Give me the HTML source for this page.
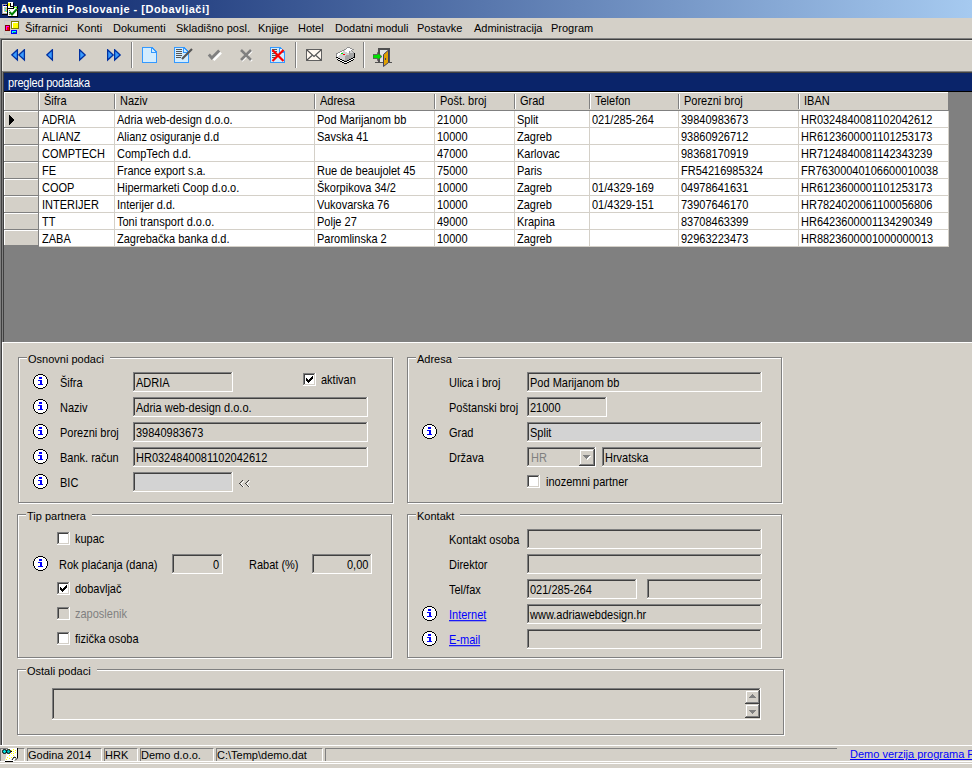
<!DOCTYPE html><html><head><meta charset="utf-8"><style>
html,body{margin:0;padding:0;width:972px;height:768px;overflow:hidden;background:#d4d0c8}
body>div,body>svg{position:absolute}
div{box-sizing:content-box}
.s{transform:scaleY(1.125);transform-origin:0 10px}
.t{position:absolute;font-family:"Liberation Sans",sans-serif;font-size:11px;line-height:13px;white-space:pre;color:#000}
</style></head><body>
<div style="left:0px;top:0px;width:972px;height:18px;background:linear-gradient(to right,#0a246a,#a6caf0);"></div>
<div class="t" style="left:20px;top:3px;color:#fff;font-weight:bold;letter-spacing:0.5px">Aventin Poslovanje - [Dobavljači]</div>
<div style="left:0px;top:18px;width:972px;height:20px;background:#d4d0c8;"></div>
<div class="t" style="left:25px;top:22px;">Šifrarnici</div>
<div class="t" style="left:77px;top:22px;">Konti</div>
<div class="t" style="left:113px;top:22px;">Dokumenti</div>
<div class="t" style="left:176px;top:22px;">Skladišno posl.</div>
<div class="t" style="left:258px;top:22px;">Knjige</div>
<div class="t" style="left:298px;top:22px;">Hotel</div>
<div class="t" style="left:335px;top:22px;">Dodatni moduli</div>
<div class="t" style="left:417px;top:22px;">Postavke</div>
<div class="t" style="left:474px;top:22px;">Administracija</div>
<div class="t" style="left:551px;top:22px;">Program</div>
<div style="left:0px;top:38px;width:972px;height:1px;background:#808080;"></div>
<div style="left:1px;top:39px;width:971px;height:1px;background:#404040;"></div>
<div style="left:0px;top:38px;width:1px;height:707px;background:#808080;"></div>
<div style="left:1px;top:39px;width:1px;height:706px;background:#404040;"></div>
<div style="left:2px;top:40px;width:970px;height:31px;background:#d4d0c8;"></div>
<div style="left:2px;top:40px;width:970px;height:1px;background:#f0eee8;"></div>
<div style="left:2px;top:40px;width:1px;height:31px;background:#f0eee8;"></div>
<div style="left:2px;top:71px;width:970px;height:1px;background:#808080;"></div>
<div style="left:3px;top:72px;width:969px;height:1px;background:#404040;"></div>
<div style="left:2px;top:71px;width:1px;height:271px;background:#808080;"></div>
<div style="left:3px;top:72px;width:1px;height:270px;background:#404040;"></div>
<div style="left:4px;top:73px;width:968px;height:269px;background:#808080;"></div>
<div style="left:4px;top:73px;width:968px;height:18px;background:#0a246a;"></div>
<div class="t s" style="left:8px;top:77px;color:#fff;letter-spacing:-0.2px">pregled podataka</div>
<div style="left:4px;top:91px;width:968px;height:1px;background:#000;"></div>
<div style="left:4px;top:92px;width:944px;height:19px;background:#d4d0c8;"></div>
<div style="left:4px;top:92px;width:944px;height:1px;background:#ffffff;"></div>
<div style="left:4px;top:110px;width:944px;height:1px;background:#808080;"></div>
<div style="left:4px;top:92px;width:1px;height:18px;background:#ffffff;"></div>
<div style="left:38px;top:92px;width:1px;height:19px;background:#808080;"></div>
<div style="left:39px;top:92px;width:1px;height:18px;background:#ffffff;"></div>
<div style="left:114px;top:94px;width:1px;height:15px;background:#808080;"></div>
<div style="left:115px;top:94px;width:1px;height:15px;background:#ffffff;"></div>
<div style="left:314px;top:94px;width:1px;height:15px;background:#808080;"></div>
<div style="left:315px;top:94px;width:1px;height:15px;background:#ffffff;"></div>
<div style="left:434px;top:94px;width:1px;height:15px;background:#808080;"></div>
<div style="left:435px;top:94px;width:1px;height:15px;background:#ffffff;"></div>
<div style="left:514px;top:94px;width:1px;height:15px;background:#808080;"></div>
<div style="left:515px;top:94px;width:1px;height:15px;background:#ffffff;"></div>
<div style="left:589px;top:94px;width:1px;height:15px;background:#808080;"></div>
<div style="left:590px;top:94px;width:1px;height:15px;background:#ffffff;"></div>
<div style="left:678px;top:94px;width:1px;height:15px;background:#808080;"></div>
<div style="left:679px;top:94px;width:1px;height:15px;background:#ffffff;"></div>
<div style="left:798px;top:94px;width:1px;height:15px;background:#808080;"></div>
<div style="left:799px;top:94px;width:1px;height:15px;background:#ffffff;"></div>
<div class="t s" style="left:44px;top:95px;">Šifra</div>
<div class="t s" style="left:120px;top:95px;">Naziv</div>
<div class="t s" style="left:320px;top:95px;">Adresa</div>
<div class="t s" style="left:440px;top:95px;">Pošt. broj</div>
<div class="t s" style="left:520px;top:95px;">Grad</div>
<div class="t s" style="left:595px;top:95px;">Telefon</div>
<div class="t s" style="left:684px;top:95px;">Porezni broj</div>
<div class="t s" style="left:804px;top:95px;">IBAN</div>
<div style="left:4px;top:111px;width:34px;height:16px;background:#d4d0c8;"></div>
<div style="left:4px;top:111px;width:34px;height:1px;background:#ffffff;"></div>
<div style="left:4px;top:111px;width:1px;height:16px;background:#ffffff;"></div>
<div style="left:4px;top:127px;width:35px;height:1px;background:#808080;"></div>
<div style="left:38px;top:111px;width:1px;height:17px;background:#808080;"></div>
<div style="left:39px;top:111px;width:910px;height:17px;background:#e8e6e0;"></div>
<div style="left:39px;top:111px;width:909px;height:16px;background:#fff;"></div>
<div style="left:114px;top:111px;width:1px;height:16px;background:#d4d0c8;"></div>
<div style="left:314px;top:111px;width:1px;height:16px;background:#d4d0c8;"></div>
<div style="left:434px;top:111px;width:1px;height:16px;background:#d4d0c8;"></div>
<div style="left:514px;top:111px;width:1px;height:16px;background:#d4d0c8;"></div>
<div style="left:589px;top:111px;width:1px;height:16px;background:#d4d0c8;"></div>
<div style="left:678px;top:111px;width:1px;height:16px;background:#d4d0c8;"></div>
<div style="left:798px;top:111px;width:1px;height:16px;background:#d4d0c8;"></div>
<div style="left:948px;top:111px;width:1px;height:17px;background:#d4d0c8;"></div>
<div style="left:39px;top:127px;width:910px;height:1px;background:#d4d0c8;"></div>
<div class="t s" style="left:42px;top:114px;">ADRIA</div>
<div class="t s" style="left:117px;top:114px;">Adria web-design d.o.o.</div>
<div class="t s" style="left:317px;top:114px;">Pod Marijanom bb</div>
<div class="t s" style="left:437px;top:114px;">21000</div>
<div class="t s" style="left:517px;top:114px;">Split</div>
<div class="t s" style="left:592px;top:114px;">021/285-264</div>
<div class="t s" style="left:681px;top:114px;">39840983673</div>
<div class="t s" style="left:801px;top:114px;">HR0324840081102042612</div>
<div style="left:4px;top:128px;width:34px;height:16px;background:#d4d0c8;"></div>
<div style="left:4px;top:128px;width:34px;height:1px;background:#ffffff;"></div>
<div style="left:4px;top:128px;width:1px;height:16px;background:#ffffff;"></div>
<div style="left:4px;top:144px;width:35px;height:1px;background:#808080;"></div>
<div style="left:38px;top:128px;width:1px;height:17px;background:#808080;"></div>
<div style="left:39px;top:128px;width:910px;height:17px;background:#e8e6e0;"></div>
<div style="left:39px;top:128px;width:909px;height:16px;background:#fff;"></div>
<div style="left:114px;top:128px;width:1px;height:16px;background:#d4d0c8;"></div>
<div style="left:314px;top:128px;width:1px;height:16px;background:#d4d0c8;"></div>
<div style="left:434px;top:128px;width:1px;height:16px;background:#d4d0c8;"></div>
<div style="left:514px;top:128px;width:1px;height:16px;background:#d4d0c8;"></div>
<div style="left:589px;top:128px;width:1px;height:16px;background:#d4d0c8;"></div>
<div style="left:678px;top:128px;width:1px;height:16px;background:#d4d0c8;"></div>
<div style="left:798px;top:128px;width:1px;height:16px;background:#d4d0c8;"></div>
<div style="left:948px;top:128px;width:1px;height:17px;background:#d4d0c8;"></div>
<div style="left:39px;top:144px;width:910px;height:1px;background:#d4d0c8;"></div>
<div class="t s" style="left:42px;top:131px;">ALIANZ</div>
<div class="t s" style="left:117px;top:131px;">Alianz osiguranje d.d</div>
<div class="t s" style="left:317px;top:131px;">Savska 41</div>
<div class="t s" style="left:437px;top:131px;">10000</div>
<div class="t s" style="left:517px;top:131px;">Zagreb</div>
<div class="t s" style="left:681px;top:131px;">93860926712</div>
<div class="t s" style="left:801px;top:131px;">HR6123600001101253173</div>
<div style="left:4px;top:145px;width:34px;height:16px;background:#d4d0c8;"></div>
<div style="left:4px;top:145px;width:34px;height:1px;background:#ffffff;"></div>
<div style="left:4px;top:145px;width:1px;height:16px;background:#ffffff;"></div>
<div style="left:4px;top:161px;width:35px;height:1px;background:#808080;"></div>
<div style="left:38px;top:145px;width:1px;height:17px;background:#808080;"></div>
<div style="left:39px;top:145px;width:910px;height:17px;background:#e8e6e0;"></div>
<div style="left:39px;top:145px;width:909px;height:16px;background:#fff;"></div>
<div style="left:114px;top:145px;width:1px;height:16px;background:#d4d0c8;"></div>
<div style="left:314px;top:145px;width:1px;height:16px;background:#d4d0c8;"></div>
<div style="left:434px;top:145px;width:1px;height:16px;background:#d4d0c8;"></div>
<div style="left:514px;top:145px;width:1px;height:16px;background:#d4d0c8;"></div>
<div style="left:589px;top:145px;width:1px;height:16px;background:#d4d0c8;"></div>
<div style="left:678px;top:145px;width:1px;height:16px;background:#d4d0c8;"></div>
<div style="left:798px;top:145px;width:1px;height:16px;background:#d4d0c8;"></div>
<div style="left:948px;top:145px;width:1px;height:17px;background:#d4d0c8;"></div>
<div style="left:39px;top:161px;width:910px;height:1px;background:#d4d0c8;"></div>
<div class="t s" style="left:42px;top:148px;">COMPTECH</div>
<div class="t s" style="left:117px;top:148px;">CompTech d.d.</div>
<div class="t s" style="left:437px;top:148px;">47000</div>
<div class="t s" style="left:517px;top:148px;">Karlovac</div>
<div class="t s" style="left:681px;top:148px;">98368170919</div>
<div class="t s" style="left:801px;top:148px;">HR7124840081142343239</div>
<div style="left:4px;top:162px;width:34px;height:16px;background:#d4d0c8;"></div>
<div style="left:4px;top:162px;width:34px;height:1px;background:#ffffff;"></div>
<div style="left:4px;top:162px;width:1px;height:16px;background:#ffffff;"></div>
<div style="left:4px;top:178px;width:35px;height:1px;background:#808080;"></div>
<div style="left:38px;top:162px;width:1px;height:17px;background:#808080;"></div>
<div style="left:39px;top:162px;width:910px;height:17px;background:#e8e6e0;"></div>
<div style="left:39px;top:162px;width:909px;height:16px;background:#fff;"></div>
<div style="left:114px;top:162px;width:1px;height:16px;background:#d4d0c8;"></div>
<div style="left:314px;top:162px;width:1px;height:16px;background:#d4d0c8;"></div>
<div style="left:434px;top:162px;width:1px;height:16px;background:#d4d0c8;"></div>
<div style="left:514px;top:162px;width:1px;height:16px;background:#d4d0c8;"></div>
<div style="left:589px;top:162px;width:1px;height:16px;background:#d4d0c8;"></div>
<div style="left:678px;top:162px;width:1px;height:16px;background:#d4d0c8;"></div>
<div style="left:798px;top:162px;width:1px;height:16px;background:#d4d0c8;"></div>
<div style="left:948px;top:162px;width:1px;height:17px;background:#d4d0c8;"></div>
<div style="left:39px;top:178px;width:910px;height:1px;background:#d4d0c8;"></div>
<div class="t s" style="left:42px;top:165px;">FE</div>
<div class="t s" style="left:117px;top:165px;">France export s.a.</div>
<div class="t s" style="left:317px;top:165px;">Rue de beaujolet 45</div>
<div class="t s" style="left:437px;top:165px;">75000</div>
<div class="t s" style="left:517px;top:165px;">Paris</div>
<div class="t s" style="left:681px;top:165px;">FR54216985324</div>
<div class="t s" style="left:801px;top:165px;">FR76300040106600010038</div>
<div style="left:4px;top:179px;width:34px;height:16px;background:#d4d0c8;"></div>
<div style="left:4px;top:179px;width:34px;height:1px;background:#ffffff;"></div>
<div style="left:4px;top:179px;width:1px;height:16px;background:#ffffff;"></div>
<div style="left:4px;top:195px;width:35px;height:1px;background:#808080;"></div>
<div style="left:38px;top:179px;width:1px;height:17px;background:#808080;"></div>
<div style="left:39px;top:179px;width:910px;height:17px;background:#e8e6e0;"></div>
<div style="left:39px;top:179px;width:909px;height:16px;background:#fff;"></div>
<div style="left:114px;top:179px;width:1px;height:16px;background:#d4d0c8;"></div>
<div style="left:314px;top:179px;width:1px;height:16px;background:#d4d0c8;"></div>
<div style="left:434px;top:179px;width:1px;height:16px;background:#d4d0c8;"></div>
<div style="left:514px;top:179px;width:1px;height:16px;background:#d4d0c8;"></div>
<div style="left:589px;top:179px;width:1px;height:16px;background:#d4d0c8;"></div>
<div style="left:678px;top:179px;width:1px;height:16px;background:#d4d0c8;"></div>
<div style="left:798px;top:179px;width:1px;height:16px;background:#d4d0c8;"></div>
<div style="left:948px;top:179px;width:1px;height:17px;background:#d4d0c8;"></div>
<div style="left:39px;top:195px;width:910px;height:1px;background:#d4d0c8;"></div>
<div class="t s" style="left:42px;top:182px;">COOP</div>
<div class="t s" style="left:117px;top:182px;">Hipermarketi Coop d.o.o.</div>
<div class="t s" style="left:317px;top:182px;">Škorpikova 34/2</div>
<div class="t s" style="left:437px;top:182px;">10000</div>
<div class="t s" style="left:517px;top:182px;">Zagreb</div>
<div class="t s" style="left:592px;top:182px;">01/4329-169</div>
<div class="t s" style="left:681px;top:182px;">04978641631</div>
<div class="t s" style="left:801px;top:182px;">HR6123600001101253173</div>
<div style="left:4px;top:196px;width:34px;height:16px;background:#d4d0c8;"></div>
<div style="left:4px;top:196px;width:34px;height:1px;background:#ffffff;"></div>
<div style="left:4px;top:196px;width:1px;height:16px;background:#ffffff;"></div>
<div style="left:4px;top:212px;width:35px;height:1px;background:#808080;"></div>
<div style="left:38px;top:196px;width:1px;height:17px;background:#808080;"></div>
<div style="left:39px;top:196px;width:910px;height:17px;background:#e8e6e0;"></div>
<div style="left:39px;top:196px;width:909px;height:16px;background:#fff;"></div>
<div style="left:114px;top:196px;width:1px;height:16px;background:#d4d0c8;"></div>
<div style="left:314px;top:196px;width:1px;height:16px;background:#d4d0c8;"></div>
<div style="left:434px;top:196px;width:1px;height:16px;background:#d4d0c8;"></div>
<div style="left:514px;top:196px;width:1px;height:16px;background:#d4d0c8;"></div>
<div style="left:589px;top:196px;width:1px;height:16px;background:#d4d0c8;"></div>
<div style="left:678px;top:196px;width:1px;height:16px;background:#d4d0c8;"></div>
<div style="left:798px;top:196px;width:1px;height:16px;background:#d4d0c8;"></div>
<div style="left:948px;top:196px;width:1px;height:17px;background:#d4d0c8;"></div>
<div style="left:39px;top:212px;width:910px;height:1px;background:#d4d0c8;"></div>
<div class="t s" style="left:42px;top:199px;">INTERIJER</div>
<div class="t s" style="left:117px;top:199px;">Interijer d.d.</div>
<div class="t s" style="left:317px;top:199px;">Vukovarska 76</div>
<div class="t s" style="left:437px;top:199px;">10000</div>
<div class="t s" style="left:517px;top:199px;">Zagreb</div>
<div class="t s" style="left:592px;top:199px;">01/4329-151</div>
<div class="t s" style="left:681px;top:199px;">73907646170</div>
<div class="t s" style="left:801px;top:199px;">HR7824020061100056806</div>
<div style="left:4px;top:213px;width:34px;height:16px;background:#d4d0c8;"></div>
<div style="left:4px;top:213px;width:34px;height:1px;background:#ffffff;"></div>
<div style="left:4px;top:213px;width:1px;height:16px;background:#ffffff;"></div>
<div style="left:4px;top:229px;width:35px;height:1px;background:#808080;"></div>
<div style="left:38px;top:213px;width:1px;height:17px;background:#808080;"></div>
<div style="left:39px;top:213px;width:910px;height:17px;background:#e8e6e0;"></div>
<div style="left:39px;top:213px;width:909px;height:16px;background:#fff;"></div>
<div style="left:114px;top:213px;width:1px;height:16px;background:#d4d0c8;"></div>
<div style="left:314px;top:213px;width:1px;height:16px;background:#d4d0c8;"></div>
<div style="left:434px;top:213px;width:1px;height:16px;background:#d4d0c8;"></div>
<div style="left:514px;top:213px;width:1px;height:16px;background:#d4d0c8;"></div>
<div style="left:589px;top:213px;width:1px;height:16px;background:#d4d0c8;"></div>
<div style="left:678px;top:213px;width:1px;height:16px;background:#d4d0c8;"></div>
<div style="left:798px;top:213px;width:1px;height:16px;background:#d4d0c8;"></div>
<div style="left:948px;top:213px;width:1px;height:17px;background:#d4d0c8;"></div>
<div style="left:39px;top:229px;width:910px;height:1px;background:#d4d0c8;"></div>
<div class="t s" style="left:42px;top:216px;">TT</div>
<div class="t s" style="left:117px;top:216px;">Toni transport d.o.o.</div>
<div class="t s" style="left:317px;top:216px;">Polje 27</div>
<div class="t s" style="left:437px;top:216px;">49000</div>
<div class="t s" style="left:517px;top:216px;">Krapina</div>
<div class="t s" style="left:681px;top:216px;">83708463399</div>
<div class="t s" style="left:801px;top:216px;">HR6423600001134290349</div>
<div style="left:4px;top:230px;width:34px;height:15px;background:#d4d0c8;"></div>
<div style="left:4px;top:230px;width:34px;height:1px;background:#ffffff;"></div>
<div style="left:4px;top:230px;width:1px;height:15px;background:#ffffff;"></div>
<div style="left:38px;top:230px;width:1px;height:16px;background:#808080;"></div>
<div style="left:39px;top:230px;width:910px;height:17px;background:#e8e6e0;"></div>
<div style="left:39px;top:230px;width:909px;height:16px;background:#fff;"></div>
<div style="left:114px;top:230px;width:1px;height:16px;background:#d4d0c8;"></div>
<div style="left:314px;top:230px;width:1px;height:16px;background:#d4d0c8;"></div>
<div style="left:434px;top:230px;width:1px;height:16px;background:#d4d0c8;"></div>
<div style="left:514px;top:230px;width:1px;height:16px;background:#d4d0c8;"></div>
<div style="left:589px;top:230px;width:1px;height:16px;background:#d4d0c8;"></div>
<div style="left:678px;top:230px;width:1px;height:16px;background:#d4d0c8;"></div>
<div style="left:798px;top:230px;width:1px;height:16px;background:#d4d0c8;"></div>
<div style="left:948px;top:230px;width:1px;height:17px;background:#d4d0c8;"></div>
<div style="left:39px;top:246px;width:910px;height:1px;background:#d4d0c8;"></div>
<div class="t s" style="left:42px;top:233px;">ZABA</div>
<div class="t s" style="left:117px;top:233px;">Zagrebačka banka d.d.</div>
<div class="t s" style="left:317px;top:233px;">Paromlinska 2</div>
<div class="t s" style="left:437px;top:233px;">10000</div>
<div class="t s" style="left:517px;top:233px;">Zagreb</div>
<div class="t s" style="left:681px;top:233px;">92963223473</div>
<div class="t s" style="left:801px;top:233px;">HR8823600001000000013</div>
<svg style="left:9px;top:115px" width="6" height="10" shape-rendering="crispEdges"><path d="M0 0h1v1h1v1h1v1h1v1h1v2h-1v1h-1v1h-1v1h-1v1h-1z" fill="#000"/></svg>
<div style="left:2px;top:342px;width:970px;height:403px;background:#d4d0c8;"></div>
<div style="left:2px;top:342px;width:970px;height:1px;background:#ffffff;"></div>
<div style="left:2px;top:342px;width:1px;height:403px;background:#ffffff;"></div>
<div style="left:18px;top:357px;width:373px;height:144px;border:1px solid #808080;box-shadow:inset 1px 1px #ffffff,1px 1px #ffffff"></div>
<div class="t" style="left:27px;top:353px;padding:0 6px 0 1px;background:#d4d0c8;line-height:13px">Osnovni podaci</div>
<div style="left:407px;top:357px;width:373px;height:144px;border:1px solid #808080;box-shadow:inset 1px 1px #ffffff,1px 1px #ffffff"></div>
<div class="t" style="left:416px;top:353px;padding:0 6px 0 1px;background:#d4d0c8;line-height:13px">Adresa</div>
<div style="left:17px;top:514px;width:373px;height:142px;border:1px solid #808080;box-shadow:inset 1px 1px #ffffff,1px 1px #ffffff"></div>
<div class="t" style="left:26px;top:510px;padding:0 6px 0 1px;background:#d4d0c8;line-height:13px">Tip partnera</div>
<div style="left:407px;top:514px;width:373px;height:142px;border:1px solid #808080;box-shadow:inset 1px 1px #ffffff,1px 1px #ffffff"></div>
<div class="t" style="left:416px;top:510px;padding:0 6px 0 1px;background:#d4d0c8;line-height:13px">Kontakt</div>
<div style="left:17px;top:669px;width:765px;height:64px;border:1px solid #808080;box-shadow:inset 1px 1px #ffffff,1px 1px #ffffff"></div>
<div class="t" style="left:26px;top:665px;padding:0 6px 0 1px;background:#d4d0c8;line-height:13px">Ostali podaci</div>
<svg style="left:33px;top:374px" width="15" height="15" shape-rendering="crispEdges"><path fill="#fff" d="M5 1h5v1h2v1h1v2h1v5h-1v2h-1v1h-2v1h-5v-1h-2v-1h-1v-2h-1v-5h1v-2h1v-1h2z"/><path fill="#000" d="M5 0h5v1h-5zM3 1h2v1h-2zM10 1h2v1h-2zM2 2h1v1h-1zM12 2h1v1h-1zM1 3h1v2h-1zM13 3h1v2h-1zM0 5h1v5h-1zM14 5h1v5h-1zM1 10h1v2h-1zM13 10h1v2h-1zM2 12h1v1h-1zM12 12h1v1h-1zM3 13h2v1h-2zM10 13h2v1h-2zM5 14h5v1h-5z"/><path fill="#0000ff" d="M6 3h3v2h-3zM5 6h4v1h-4zM7 7h2v3h-2zM5 10h5v1h-5z"/></svg>
<div class="t s" style="left:60px;top:377px;">Šifra</div>
<div style="left:133px;top:372px;width:100px;height:20px;background:#ffffff"></div>
<div style="left:133px;top:372px;width:99px;height:19px;background:#808080"></div>
<div style="left:134px;top:373px;width:98px;height:18px;background:#d4d0c8"></div>
<div style="left:134px;top:373px;width:97px;height:17px;background:#404040"></div>
<div style="left:135px;top:374px;width:96px;height:16px;background:#d4d0c8"></div>
<div class="t s" style="left:136px;top:377px;">ADRIA</div>
<svg style="left:33px;top:399px" width="15" height="15" shape-rendering="crispEdges"><path fill="#fff" d="M5 1h5v1h2v1h1v2h1v5h-1v2h-1v1h-2v1h-5v-1h-2v-1h-1v-2h-1v-5h1v-2h1v-1h2z"/><path fill="#000" d="M5 0h5v1h-5zM3 1h2v1h-2zM10 1h2v1h-2zM2 2h1v1h-1zM12 2h1v1h-1zM1 3h1v2h-1zM13 3h1v2h-1zM0 5h1v5h-1zM14 5h1v5h-1zM1 10h1v2h-1zM13 10h1v2h-1zM2 12h1v1h-1zM12 12h1v1h-1zM3 13h2v1h-2zM10 13h2v1h-2zM5 14h5v1h-5z"/><path fill="#0000ff" d="M6 3h3v2h-3zM5 6h4v1h-4zM7 7h2v3h-2zM5 10h5v1h-5z"/></svg>
<div class="t s" style="left:60px;top:402px;">Naziv</div>
<div style="left:133px;top:397px;width:235px;height:20px;background:#ffffff"></div>
<div style="left:133px;top:397px;width:234px;height:19px;background:#808080"></div>
<div style="left:134px;top:398px;width:233px;height:18px;background:#d4d0c8"></div>
<div style="left:134px;top:398px;width:232px;height:17px;background:#404040"></div>
<div style="left:135px;top:399px;width:231px;height:16px;background:#d4d0c8"></div>
<div class="t s" style="left:136px;top:402px;">Adria web-design d.o.o.</div>
<svg style="left:33px;top:424px" width="15" height="15" shape-rendering="crispEdges"><path fill="#fff" d="M5 1h5v1h2v1h1v2h1v5h-1v2h-1v1h-2v1h-5v-1h-2v-1h-1v-2h-1v-5h1v-2h1v-1h2z"/><path fill="#000" d="M5 0h5v1h-5zM3 1h2v1h-2zM10 1h2v1h-2zM2 2h1v1h-1zM12 2h1v1h-1zM1 3h1v2h-1zM13 3h1v2h-1zM0 5h1v5h-1zM14 5h1v5h-1zM1 10h1v2h-1zM13 10h1v2h-1zM2 12h1v1h-1zM12 12h1v1h-1zM3 13h2v1h-2zM10 13h2v1h-2zM5 14h5v1h-5z"/><path fill="#0000ff" d="M6 3h3v2h-3zM5 6h4v1h-4zM7 7h2v3h-2zM5 10h5v1h-5z"/></svg>
<div class="t s" style="left:60px;top:427px;">Porezni broj</div>
<div style="left:133px;top:422px;width:235px;height:20px;background:#ffffff"></div>
<div style="left:133px;top:422px;width:234px;height:19px;background:#808080"></div>
<div style="left:134px;top:423px;width:233px;height:18px;background:#d4d0c8"></div>
<div style="left:134px;top:423px;width:232px;height:17px;background:#404040"></div>
<div style="left:135px;top:424px;width:231px;height:16px;background:#d4d0c8"></div>
<div class="t s" style="left:136px;top:427px;">39840983673</div>
<svg style="left:33px;top:449px" width="15" height="15" shape-rendering="crispEdges"><path fill="#fff" d="M5 1h5v1h2v1h1v2h1v5h-1v2h-1v1h-2v1h-5v-1h-2v-1h-1v-2h-1v-5h1v-2h1v-1h2z"/><path fill="#000" d="M5 0h5v1h-5zM3 1h2v1h-2zM10 1h2v1h-2zM2 2h1v1h-1zM12 2h1v1h-1zM1 3h1v2h-1zM13 3h1v2h-1zM0 5h1v5h-1zM14 5h1v5h-1zM1 10h1v2h-1zM13 10h1v2h-1zM2 12h1v1h-1zM12 12h1v1h-1zM3 13h2v1h-2zM10 13h2v1h-2zM5 14h5v1h-5z"/><path fill="#0000ff" d="M6 3h3v2h-3zM5 6h4v1h-4zM7 7h2v3h-2zM5 10h5v1h-5z"/></svg>
<div class="t s" style="left:60px;top:452px;">Bank. račun</div>
<div style="left:133px;top:447px;width:235px;height:20px;background:#ffffff"></div>
<div style="left:133px;top:447px;width:234px;height:19px;background:#808080"></div>
<div style="left:134px;top:448px;width:233px;height:18px;background:#d4d0c8"></div>
<div style="left:134px;top:448px;width:232px;height:17px;background:#404040"></div>
<div style="left:135px;top:449px;width:231px;height:16px;background:#d4d0c8"></div>
<div class="t s" style="left:136px;top:452px;">HR0324840081102042612</div>
<svg style="left:33px;top:474px" width="15" height="15" shape-rendering="crispEdges"><path fill="#fff" d="M5 1h5v1h2v1h1v2h1v5h-1v2h-1v1h-2v1h-5v-1h-2v-1h-1v-2h-1v-5h1v-2h1v-1h2z"/><path fill="#000" d="M5 0h5v1h-5zM3 1h2v1h-2zM10 1h2v1h-2zM2 2h1v1h-1zM12 2h1v1h-1zM1 3h1v2h-1zM13 3h1v2h-1zM0 5h1v5h-1zM14 5h1v5h-1zM1 10h1v2h-1zM13 10h1v2h-1zM2 12h1v1h-1zM12 12h1v1h-1zM3 13h2v1h-2zM10 13h2v1h-2zM5 14h5v1h-5z"/><path fill="#0000ff" d="M6 3h3v2h-3zM5 6h4v1h-4zM7 7h2v3h-2zM5 10h5v1h-5z"/></svg>
<div class="t s" style="left:60px;top:477px;">BIC</div>
<div style="left:133px;top:472px;width:100px;height:20px;background:#ffffff"></div>
<div style="left:133px;top:472px;width:99px;height:19px;background:#808080"></div>
<div style="left:134px;top:473px;width:98px;height:18px;background:#d4d0c8"></div>
<div style="left:134px;top:473px;width:97px;height:17px;background:#404040"></div>
<div style="left:135px;top:474px;width:96px;height:16px;background:#d3d3d3"></div>
<svg style="left:239px;top:480px" width="12" height="8" shape-rendering="crispEdges"><path fill="#fff" d="M4 1h1v1h-1zM3 2h1v1h-1zM2 3h1v1h-1zM2 4h1v1h-1zM3 5h1v1h-1zM4 6h1v1h-1zM10 1h1v1h-1zM9 2h1v1h-1zM8 3h1v1h-1zM8 4h1v1h-1zM9 5h1v1h-1zM10 6h1v1h-1z"/><path fill="#404040" d="M3 0h1v1h-1zM2 1h1v1h-1zM1 2h1v1h-1zM0 3h1v1h-1zM1 4h1v1h-1zM2 5h1v1h-1zM3 6h1v1h-1zM9 0h1v1h-1zM8 1h1v1h-1zM7 2h1v1h-1zM6 3h1v1h-1zM7 4h1v1h-1zM8 5h1v1h-1zM9 6h1v1h-1z"/></svg>
<div style="left:303px;top:373px;width:13px;height:13px;background:#ffffff"></div>
<div style="left:303px;top:373px;width:12px;height:12px;background:#808080"></div>
<div style="left:304px;top:374px;width:11px;height:11px;background:#d4d0c8"></div>
<div style="left:304px;top:374px;width:10px;height:10px;background:#404040"></div>
<div style="left:305px;top:375px;width:9px;height:9px;background:#ffffff"></div>
<svg style="left:306px;top:376px" width="7" height="7" shape-rendering="crispEdges"><path fill="#000" d="M6 0h1v3h-1v1h-1v1h-1v1h-1v1h-1v-1h-1v-1h-1v-3h1v1h1v1h1v-1h1v-1h1v-1h1z"/></svg>
<div class="t s" style="left:321px;top:374px;">aktivan</div>
<div class="t s" style="left:449px;top:377px;">Ulica i broj</div>
<div style="left:527px;top:372px;width:235px;height:20px;background:#ffffff"></div>
<div style="left:527px;top:372px;width:234px;height:19px;background:#808080"></div>
<div style="left:528px;top:373px;width:233px;height:18px;background:#d4d0c8"></div>
<div style="left:528px;top:373px;width:232px;height:17px;background:#404040"></div>
<div style="left:529px;top:374px;width:231px;height:16px;background:#d4d0c8"></div>
<div class="t s" style="left:530px;top:377px;">Pod Marijanom bb</div>
<div class="t s" style="left:449px;top:402px;">Poštanski broj</div>
<div style="left:527px;top:397px;width:80px;height:20px;background:#ffffff"></div>
<div style="left:527px;top:397px;width:79px;height:19px;background:#808080"></div>
<div style="left:528px;top:398px;width:78px;height:18px;background:#d4d0c8"></div>
<div style="left:528px;top:398px;width:77px;height:17px;background:#404040"></div>
<div style="left:529px;top:399px;width:76px;height:16px;background:#d4d0c8"></div>
<div class="t s" style="left:530px;top:402px;">21000</div>
<svg style="left:422px;top:424px" width="15" height="15" shape-rendering="crispEdges"><path fill="#fff" d="M5 1h5v1h2v1h1v2h1v5h-1v2h-1v1h-2v1h-5v-1h-2v-1h-1v-2h-1v-5h1v-2h1v-1h2z"/><path fill="#000" d="M5 0h5v1h-5zM3 1h2v1h-2zM10 1h2v1h-2zM2 2h1v1h-1zM12 2h1v1h-1zM1 3h1v2h-1zM13 3h1v2h-1zM0 5h1v5h-1zM14 5h1v5h-1zM1 10h1v2h-1zM13 10h1v2h-1zM2 12h1v1h-1zM12 12h1v1h-1zM3 13h2v1h-2zM10 13h2v1h-2zM5 14h5v1h-5z"/><path fill="#0000ff" d="M6 3h3v2h-3zM5 6h4v1h-4zM7 7h2v3h-2zM5 10h5v1h-5z"/></svg>
<div class="t s" style="left:449px;top:427px;">Grad</div>
<div style="left:527px;top:422px;width:235px;height:20px;background:#ffffff"></div>
<div style="left:527px;top:422px;width:234px;height:19px;background:#808080"></div>
<div style="left:528px;top:423px;width:233px;height:18px;background:#d4d0c8"></div>
<div style="left:528px;top:423px;width:232px;height:17px;background:#404040"></div>
<div style="left:529px;top:424px;width:231px;height:16px;background:#d3d3d3"></div>
<div class="t s" style="left:530px;top:427px;">Split</div>
<div class="t s" style="left:449px;top:452px;">Država</div>
<div style="left:527px;top:447px;width:69px;height:20px;background:#ffffff"></div>
<div style="left:527px;top:447px;width:68px;height:19px;background:#808080"></div>
<div style="left:528px;top:448px;width:67px;height:18px;background:#d4d0c8"></div>
<div style="left:528px;top:448px;width:66px;height:17px;background:#404040"></div>
<div style="left:529px;top:449px;width:65px;height:16px;background:#d4d0c8"></div>
<div class="t s" style="left:531px;top:452px;color:#808080">HR</div>
<div style="left:579px;top:449px;width:16px;height:17px;background:#404040"></div>
<div style="left:579px;top:449px;width:15px;height:16px;background:#d4d0c8"></div>
<div style="left:580px;top:450px;width:14px;height:15px;background:#808080"></div>
<div style="left:580px;top:450px;width:13px;height:14px;background:#ffffff"></div>
<div style="left:581px;top:451px;width:12px;height:13px;background:#d4d0c8"></div>
<svg style="left:583px;top:455px" width="8" height="5" shape-rendering="crispEdges"><path d="M1 1h7v1h-1v1h-1v1h-1v1h-1z" fill="#fff"/><path d="M0 0h7v1h-1v1h-1v1h-1v1h-1v-1h-1v-1h-1v-1h-1z" fill="#808080"/></svg>
<div style="left:602px;top:447px;width:160px;height:20px;background:#ffffff"></div>
<div style="left:602px;top:447px;width:159px;height:19px;background:#808080"></div>
<div style="left:603px;top:448px;width:158px;height:18px;background:#d4d0c8"></div>
<div style="left:603px;top:448px;width:157px;height:17px;background:#404040"></div>
<div style="left:604px;top:449px;width:156px;height:16px;background:#d4d0c8"></div>
<div class="t s" style="left:605px;top:452px;">Hrvatska</div>
<div style="left:527px;top:475px;width:13px;height:13px;background:#ffffff"></div>
<div style="left:527px;top:475px;width:12px;height:12px;background:#808080"></div>
<div style="left:528px;top:476px;width:11px;height:11px;background:#d4d0c8"></div>
<div style="left:528px;top:476px;width:10px;height:10px;background:#404040"></div>
<div style="left:529px;top:477px;width:9px;height:9px;background:#ffffff"></div>
<div class="t s" style="left:546px;top:476px;">inozemni partner</div>
<div style="left:57px;top:532px;width:13px;height:13px;background:#ffffff"></div>
<div style="left:57px;top:532px;width:12px;height:12px;background:#808080"></div>
<div style="left:58px;top:533px;width:11px;height:11px;background:#d4d0c8"></div>
<div style="left:58px;top:533px;width:10px;height:10px;background:#404040"></div>
<div style="left:59px;top:534px;width:9px;height:9px;background:#ffffff"></div>
<div class="t s" style="left:75px;top:533px;">kupac</div>
<svg style="left:33px;top:556px" width="15" height="15" shape-rendering="crispEdges"><path fill="#fff" d="M5 1h5v1h2v1h1v2h1v5h-1v2h-1v1h-2v1h-5v-1h-2v-1h-1v-2h-1v-5h1v-2h1v-1h2z"/><path fill="#000" d="M5 0h5v1h-5zM3 1h2v1h-2zM10 1h2v1h-2zM2 2h1v1h-1zM12 2h1v1h-1zM1 3h1v2h-1zM13 3h1v2h-1zM0 5h1v5h-1zM14 5h1v5h-1zM1 10h1v2h-1zM13 10h1v2h-1zM2 12h1v1h-1zM12 12h1v1h-1zM3 13h2v1h-2zM10 13h2v1h-2zM5 14h5v1h-5z"/><path fill="#0000ff" d="M6 3h3v2h-3zM5 6h4v1h-4zM7 7h2v3h-2zM5 10h5v1h-5z"/></svg>
<div class="t s" style="left:59px;top:559px;">Rok plaćanja (dana)</div>
<div style="left:172px;top:554px;width:51px;height:20px;background:#ffffff"></div>
<div style="left:172px;top:554px;width:50px;height:19px;background:#808080"></div>
<div style="left:173px;top:555px;width:49px;height:18px;background:#d4d0c8"></div>
<div style="left:173px;top:555px;width:48px;height:17px;background:#404040"></div>
<div style="left:174px;top:556px;width:47px;height:16px;background:#d4d0c8"></div>
<div class="t s" style="left:213px;top:559px;">0</div>
<div class="t s" style="left:249px;top:559px;">Rabat (%)</div>
<div style="left:312px;top:554px;width:60px;height:20px;background:#ffffff"></div>
<div style="left:312px;top:554px;width:59px;height:19px;background:#808080"></div>
<div style="left:313px;top:555px;width:58px;height:18px;background:#d4d0c8"></div>
<div style="left:313px;top:555px;width:57px;height:17px;background:#404040"></div>
<div style="left:314px;top:556px;width:56px;height:16px;background:#d4d0c8"></div>
<div class="t s" style="left:347px;top:559px;">0,00</div>
<div style="left:57px;top:582px;width:13px;height:13px;background:#ffffff"></div>
<div style="left:57px;top:582px;width:12px;height:12px;background:#808080"></div>
<div style="left:58px;top:583px;width:11px;height:11px;background:#d4d0c8"></div>
<div style="left:58px;top:583px;width:10px;height:10px;background:#404040"></div>
<div style="left:59px;top:584px;width:9px;height:9px;background:#ffffff"></div>
<svg style="left:60px;top:585px" width="7" height="7" shape-rendering="crispEdges"><path fill="#000" d="M6 0h1v3h-1v1h-1v1h-1v1h-1v1h-1v-1h-1v-1h-1v-3h1v1h1v1h1v-1h1v-1h1v-1h1z"/></svg>
<div class="t s" style="left:75px;top:583px;">dobavljač</div>
<div style="left:57px;top:607px;width:13px;height:13px;background:#ffffff"></div>
<div style="left:57px;top:607px;width:12px;height:12px;background:#808080"></div>
<div style="left:58px;top:608px;width:11px;height:11px;background:#d4d0c8"></div>
<div style="left:58px;top:608px;width:10px;height:10px;background:#404040"></div>
<div style="left:59px;top:609px;width:9px;height:9px;background:#d4d0c8"></div>
<div class="t s" style="left:75px;top:608px;color:#808080">zaposlenik</div>
<div style="left:57px;top:632px;width:13px;height:13px;background:#ffffff"></div>
<div style="left:57px;top:632px;width:12px;height:12px;background:#808080"></div>
<div style="left:58px;top:633px;width:11px;height:11px;background:#d4d0c8"></div>
<div style="left:58px;top:633px;width:10px;height:10px;background:#404040"></div>
<div style="left:59px;top:634px;width:9px;height:9px;background:#ffffff"></div>
<div class="t s" style="left:75px;top:633px;">fizička osoba</div>
<div class="t s" style="left:449px;top:534px;">Kontakt osoba</div>
<div style="left:527px;top:529px;width:235px;height:20px;background:#ffffff"></div>
<div style="left:527px;top:529px;width:234px;height:19px;background:#808080"></div>
<div style="left:528px;top:530px;width:233px;height:18px;background:#d4d0c8"></div>
<div style="left:528px;top:530px;width:232px;height:17px;background:#404040"></div>
<div style="left:529px;top:531px;width:231px;height:16px;background:#d4d0c8"></div>
<div class="t s" style="left:449px;top:559px;">Direktor</div>
<div style="left:527px;top:554px;width:235px;height:20px;background:#ffffff"></div>
<div style="left:527px;top:554px;width:234px;height:19px;background:#808080"></div>
<div style="left:528px;top:555px;width:233px;height:18px;background:#d4d0c8"></div>
<div style="left:528px;top:555px;width:232px;height:17px;background:#404040"></div>
<div style="left:529px;top:556px;width:231px;height:16px;background:#d4d0c8"></div>
<div class="t s" style="left:449px;top:584px;">Tel/fax</div>
<div style="left:527px;top:579px;width:110px;height:20px;background:#ffffff"></div>
<div style="left:527px;top:579px;width:109px;height:19px;background:#808080"></div>
<div style="left:528px;top:580px;width:108px;height:18px;background:#d4d0c8"></div>
<div style="left:528px;top:580px;width:107px;height:17px;background:#404040"></div>
<div style="left:529px;top:581px;width:106px;height:16px;background:#d4d0c8"></div>
<div class="t s" style="left:530px;top:584px;">021/285-264</div>
<div style="left:647px;top:579px;width:115px;height:20px;background:#ffffff"></div>
<div style="left:647px;top:579px;width:114px;height:19px;background:#808080"></div>
<div style="left:648px;top:580px;width:113px;height:18px;background:#d4d0c8"></div>
<div style="left:648px;top:580px;width:112px;height:17px;background:#404040"></div>
<div style="left:649px;top:581px;width:111px;height:16px;background:#d4d0c8"></div>
<svg style="left:422px;top:606px" width="15" height="15" shape-rendering="crispEdges"><path fill="#fff" d="M5 1h5v1h2v1h1v2h1v5h-1v2h-1v1h-2v1h-5v-1h-2v-1h-1v-2h-1v-5h1v-2h1v-1h2z"/><path fill="#000" d="M5 0h5v1h-5zM3 1h2v1h-2zM10 1h2v1h-2zM2 2h1v1h-1zM12 2h1v1h-1zM1 3h1v2h-1zM13 3h1v2h-1zM0 5h1v5h-1zM14 5h1v5h-1zM1 10h1v2h-1zM13 10h1v2h-1zM2 12h1v1h-1zM12 12h1v1h-1zM3 13h2v1h-2zM10 13h2v1h-2zM5 14h5v1h-5z"/><path fill="#0000ff" d="M6 3h3v2h-3zM5 6h4v1h-4zM7 7h2v3h-2zM5 10h5v1h-5z"/></svg>
<div class="t s" style="left:449px;top:609px;color:#0000ff;text-decoration:underline">Internet</div>
<div style="left:527px;top:604px;width:235px;height:20px;background:#ffffff"></div>
<div style="left:527px;top:604px;width:234px;height:19px;background:#808080"></div>
<div style="left:528px;top:605px;width:233px;height:18px;background:#d4d0c8"></div>
<div style="left:528px;top:605px;width:232px;height:17px;background:#404040"></div>
<div style="left:529px;top:606px;width:231px;height:16px;background:#d4d0c8"></div>
<div class="t s" style="left:530px;top:609px;">www.adriawebdesign.hr</div>
<svg style="left:422px;top:631px" width="15" height="15" shape-rendering="crispEdges"><path fill="#fff" d="M5 1h5v1h2v1h1v2h1v5h-1v2h-1v1h-2v1h-5v-1h-2v-1h-1v-2h-1v-5h1v-2h1v-1h2z"/><path fill="#000" d="M5 0h5v1h-5zM3 1h2v1h-2zM10 1h2v1h-2zM2 2h1v1h-1zM12 2h1v1h-1zM1 3h1v2h-1zM13 3h1v2h-1zM0 5h1v5h-1zM14 5h1v5h-1zM1 10h1v2h-1zM13 10h1v2h-1zM2 12h1v1h-1zM12 12h1v1h-1zM3 13h2v1h-2zM10 13h2v1h-2zM5 14h5v1h-5z"/><path fill="#0000ff" d="M6 3h3v2h-3zM5 6h4v1h-4zM7 7h2v3h-2zM5 10h5v1h-5z"/></svg>
<div class="t s" style="left:449px;top:634px;color:#0000ff;text-decoration:underline">E-mail</div>
<div style="left:527px;top:629px;width:235px;height:20px;background:#ffffff"></div>
<div style="left:527px;top:629px;width:234px;height:19px;background:#808080"></div>
<div style="left:528px;top:630px;width:233px;height:18px;background:#d4d0c8"></div>
<div style="left:528px;top:630px;width:232px;height:17px;background:#404040"></div>
<div style="left:529px;top:631px;width:231px;height:16px;background:#d4d0c8"></div>
<div style="left:52px;top:688px;width:709px;height:32px;background:#ffffff"></div>
<div style="left:52px;top:688px;width:708px;height:31px;background:#808080"></div>
<div style="left:53px;top:689px;width:707px;height:30px;background:#d4d0c8"></div>
<div style="left:53px;top:689px;width:706px;height:29px;background:#404040"></div>
<div style="left:54px;top:690px;width:705px;height:28px;background:#d4d0c8"></div>
<div style="left:745px;top:690px;width:15px;height:14px;background:#404040"></div>
<div style="left:745px;top:690px;width:14px;height:13px;background:#d4d0c8"></div>
<div style="left:746px;top:691px;width:13px;height:12px;background:#808080"></div>
<div style="left:746px;top:691px;width:12px;height:11px;background:#ffffff"></div>
<div style="left:747px;top:692px;width:11px;height:10px;background:#d4d0c8"></div>
<div style="left:745px;top:704px;width:15px;height:14px;background:#404040"></div>
<div style="left:745px;top:704px;width:14px;height:13px;background:#d4d0c8"></div>
<div style="left:746px;top:705px;width:13px;height:12px;background:#808080"></div>
<div style="left:746px;top:705px;width:12px;height:11px;background:#ffffff"></div>
<div style="left:747px;top:706px;width:11px;height:10px;background:#d4d0c8"></div>
<svg style="left:749px;top:694px" width="7" height="4" shape-rendering="crispEdges"><path d="M3 0h1v1h1v1h1v1h1v1h-7v-1h1v-1h1v-1h1z" fill="#808080"/></svg>
<svg style="left:749px;top:710px" width="7" height="4" shape-rendering="crispEdges"><path d="M0 0h7v1h-1v1h-1v1h-1v1h-1v-1h-1v-1h-1v-1h-1z" fill="#808080"/></svg>
<div style="left:0px;top:745px;width:972px;height:1px;background:#ffffff;"></div>
<div style="left:0px;top:748px;width:24px;height:13px;border-top:1px solid #808080;border-left:1px solid #808080;border-right:1px solid #ffffff;border-bottom:1px solid #ffffff;box-sizing:border-box;width:25px;height:14px"></div>
<div style="left:27px;top:748px;width:74px;height:13px;border-top:1px solid #808080;border-left:1px solid #808080;border-right:1px solid #ffffff;border-bottom:1px solid #ffffff;box-sizing:border-box;width:75px;height:14px"></div>
<div class="t" style="left:28px;top:749px;">Godina 2014</div>
<div style="left:104px;top:748px;width:33px;height:13px;border-top:1px solid #808080;border-left:1px solid #808080;border-right:1px solid #ffffff;border-bottom:1px solid #ffffff;box-sizing:border-box;width:34px;height:14px"></div>
<div class="t" style="left:105px;top:749px;">HRK</div>
<div style="left:140px;top:748px;width:73px;height:13px;border-top:1px solid #808080;border-left:1px solid #808080;border-right:1px solid #ffffff;border-bottom:1px solid #ffffff;box-sizing:border-box;width:74px;height:14px"></div>
<div class="t" style="left:141px;top:749px;">Demo d.o.o.</div>
<div style="left:216px;top:748px;width:106px;height:13px;border-top:1px solid #808080;border-left:1px solid #808080;border-right:1px solid #ffffff;border-bottom:1px solid #ffffff;box-sizing:border-box;width:107px;height:14px"></div>
<div class="t" style="left:217px;top:749px;">C:\Temp\demo.dat</div>
<div style="left:325px;top:748px;width:512px;height:1px;background:#808080;"></div>
<div style="left:325px;top:748px;width:1px;height:13px;background:#808080;"></div>
<div style="left:0px;top:761px;width:972px;height:1px;background:#ffffff;"></div>
<div class="t" style="left:850px;top:748px;color:#0000ff;text-decoration:underline">Demo verzija programa Poslovanje</div>
<div style="left:0px;top:763px;width:972px;height:1px;background:#ffffff;"></div>
<svg style="left:0px;top:0px" width="20" height="18" shape-rendering="crispEdges"><rect x="2" y="4" width="6" height="11" fill="#000"/><rect x="2" y="4" width="5" height="10" fill="#a8a8a8"/><rect x="3" y="5" width="4" height="8" fill="#fff"/><rect x="3" y="5" width="1" height="1" fill="#0000ff"/><rect x="5" y="5" width="1" height="1" fill="#0000ff"/><rect x="4" y="5" width="1" height="1" fill="#000"/><rect x="6" y="5" width="1" height="1" fill="#000"/><rect x="4" y="7" width="3" height="5" fill="#c0c0c0"/><rect x="5" y="8" width="1" height="1" fill="#00e0ff"/><rect x="6" y="8" width="1" height="1" fill="#ffe000"/><rect x="5" y="10" width="1" height="1" fill="#00e0ff"/><rect x="6" y="10" width="1" height="1" fill="#ffe000"/><rect x="5" y="11" width="1" height="1" fill="#ffe000"/><rect x="6" y="11" width="1" height="1" fill="#00e0ff"/><rect x="8" y="6" width="10" height="11" fill="#000"/><rect x="8" y="6" width="9" height="10" fill="#b0b0b0"/><rect x="8" y="8" width="9" height="8" fill="#fff"/><rect x="14" y="7" width="3" height="1" fill="#00ff00"/><rect x="15" y="7" width="1" height="1" fill="#ffff00"/><rect x="17" y="9" width="1" height="1" fill="#e00000"/><rect x="9" y="10" width="1" height="1" fill="#606060"/><rect x="9" y="12" width="1" height="1" fill="#606060"/><rect x="9" y="14" width="1" height="1" fill="#606060"/><rect x="8" y="3" width="6" height="6" fill="#000"/><rect x="8" y="2" width="5" height="6" fill="#fff"/><rect x="8" y="3" width="2" height="3" fill="#ffff00"/><rect x="10" y="3" width="1" height="4" fill="#000"/><rect x="10" y="6" width="3" height="1" fill="#000"/></svg>
<svg style="left:0px;top:0px" width="20" height="18"><path d="M9.5 12 L12 14.5 L17 9" stroke="#008000" stroke-width="2" fill="none"/></svg>
<svg style="left:4px;top:20px" width="16" height="15" shape-rendering="crispEdges"><rect x="0" y="0" width="16" height="15" fill="#c8c8c8"/><rect x="1" y="1" width="14" height="13" fill="#d4d0c8"/><rect x="1" y="5" width="5" height="6" fill="#800000"/><rect x="2" y="6" width="3" height="4" fill="#ff0000"/><rect x="2" y="6" width="3" height="1" fill="#ff00ff"/><rect x="2" y="6" width="1" height="4" fill="#ff00ff"/><rect x="7" y="1" width="8" height="8" fill="#808000"/><rect x="8" y="2" width="6" height="6" fill="#ffff00"/><rect x="8" y="2" width="6" height="1" fill="#fff"/><rect x="8" y="2" width="1" height="6" fill="#fff"/><rect x="7" y="10" width="6" height="4" fill="#0000ff"/><rect x="8" y="11" width="4" height="2" fill="#00ffff"/><rect x="9" y="12" width="3" height="1" fill="#008080"/></svg>
<svg style="left:11px;top:49px" width="8" height="13"><path d="M6.4 0.7 L0.8 5.9 L6.4 11.1 Z" fill="#3a9cff" stroke="#0030a0" stroke-width="1.3" stroke-linejoin="miter"/></svg>
<svg style="left:18px;top:49px" width="8" height="13"><path d="M6.4 0.7 L0.8 5.9 L6.4 11.1 Z" fill="#3a9cff" stroke="#0030a0" stroke-width="1.3" stroke-linejoin="miter"/></svg>
<svg style="left:46px;top:49px" width="8" height="13"><path d="M6.4 0.7 L0.8 5.9 L6.4 11.1 Z" fill="#3a9cff" stroke="#0030a0" stroke-width="1.3" stroke-linejoin="miter"/></svg>
<svg style="left:79px;top:49px" width="8" height="13"><path d="M0.6 0.7 L6.2 5.9 L0.6 11.1 Z" fill="#3a9cff" stroke="#0030a0" stroke-width="1.3" stroke-linejoin="miter"/></svg>
<svg style="left:107px;top:49px" width="8" height="13"><path d="M0.6 0.7 L6.2 5.9 L0.6 11.1 Z" fill="#3a9cff" stroke="#0030a0" stroke-width="1.3" stroke-linejoin="miter"/></svg>
<svg style="left:114px;top:49px" width="8" height="13"><path d="M0.6 0.7 L6.2 5.9 L0.6 11.1 Z" fill="#3a9cff" stroke="#0030a0" stroke-width="1.3" stroke-linejoin="miter"/></svg>
<div style="left:131px;top:42px;width:1px;height:26px;background:#808080;"></div>
<div style="left:132px;top:42px;width:1px;height:26px;background:#ffffff;"></div>
<div style="left:295px;top:42px;width:1px;height:26px;background:#808080;"></div>
<div style="left:296px;top:42px;width:1px;height:26px;background:#ffffff;"></div>
<div style="left:363px;top:42px;width:1px;height:26px;background:#808080;"></div>
<div style="left:364px;top:42px;width:1px;height:26px;background:#ffffff;"></div>
<svg style="left:142px;top:47px" width="16" height="16" shape-rendering="crispEdges"><path d="M0 0h10l5 5v11h-15z" fill="#3399ff"/><path d="M1 1h8v5h5v9h-13z" fill="#d2ecff"/><path d="M10 2l3 3h-3z" fill="#d2ecff"/></svg>
<svg style="left:174px;top:47px" width="20" height="16" shape-rendering="crispEdges"><path d="M0 0h10l5 5v11h-15z" fill="#3399ff"/><path d="M1 1h8v5h5v9h-13z" fill="#d2ecff"/><path d="M10 2l3 3h-3z" fill="#d2ecff"/><rect x="2" y="2" width="6" height="1" fill="#555"/><rect x="2" y="4" width="6" height="1" fill="#555"/><rect x="2" y="6" width="6" height="1" fill="#555"/><rect x="2" y="8" width="6" height="1" fill="#555"/><rect x="2" y="10" width="5" height="1" fill="#555"/></svg>
<svg style="left:180px;top:48px" width="14" height="13"><path d="M2 11 L12 1" stroke="#555" stroke-width="2.2"/></svg>
<svg style="left:207px;top:48px" width="16" height="15"><path d="M5.5 11 L13 3.5" stroke="#fff" stroke-width="2.6" fill="none" transform="translate(1,1.2)"/><path d="M1.8 6.5 L4.8 10 L12.2 2.5" stroke="#808080" stroke-width="2.8" fill="none"/></svg>
<svg style="left:239px;top:48px" width="15" height="15"><g transform="translate(0.8,1)"><path d="M2 2 L12 12 M12 2 L2 12" stroke="#fff" stroke-width="2.4"/></g><path d="M2 2 L12 12 M12 2 L2 12" stroke="#808080" stroke-width="2.6"/></svg>
<svg style="left:270px;top:47px" width="16" height="17" shape-rendering="crispEdges"><path d="M0 0h10l5 5v11h-15z" fill="#3399ff"/><path d="M1 1h8v5h5v9h-13z" fill="#d2ecff"/><path d="M10 2h2v1h1v2h-3z" fill="#eaf6ff"/><rect x="2" y="2" width="5" height="1" fill="#555"/><rect x="2" y="4" width="5" height="1" fill="#555"/><rect x="2" y="6" width="5" height="1" fill="#555"/><rect x="2" y="8" width="5" height="1" fill="#555"/><rect x="2" y="10" width="5" height="1" fill="#555"/></svg>
<svg style="left:271px;top:49px" width="14" height="13"><path d="M1.5 1 L12.5 12 M12.5 1 L1.5 12" stroke="#ff0000" stroke-width="2.2"/></svg>
<svg style="left:306px;top:49px" width="17" height="12" shape-rendering="crispEdges"><rect x="0" y="0" width="16" height="12" fill="#606060"/><rect x="1" y="1" width="14" height="10" fill="#fff8f0"/></svg>
<svg style="left:306px;top:49px" width="17" height="12"><path d="M1 1 L8 7.5 L15 1 M1 11 L6 6.5 M15 11 L10 6.5" stroke="#505050" stroke-width="1.1" fill="none"/></svg>
<svg style="left:333px;top:44px" width="24" height="21" shape-rendering="crispEdges"><rect x="14" y="3" width="3" height="1" fill="#909090"/><rect x="13" y="4" width="1" height="1" fill="#909090"/><rect x="14" y="4" width="3" height="1" fill="#ffffff"/><rect x="17" y="4" width="2" height="1" fill="#909090"/><rect x="11" y="5" width="2" height="1" fill="#909090"/><rect x="13" y="5" width="6" height="1" fill="#ffffff"/><rect x="19" y="5" width="2" height="1" fill="#909090"/><rect x="9" y="6" width="2" height="1" fill="#909090"/><rect x="11" y="6" width="1" height="1" fill="#d0d0d0"/><rect x="12" y="6" width="6" height="1" fill="#ffffff"/><rect x="18" y="6" width="1" height="1" fill="#909090"/><rect x="7" y="7" width="2" height="1" fill="#909090"/><rect x="9" y="7" width="1" height="1" fill="#ffffff"/><rect x="10" y="7" width="2" height="1" fill="#d0d0d0"/><rect x="12" y="7" width="4" height="1" fill="#ffffff"/><rect x="16" y="7" width="1" height="1" fill="#909090"/><rect x="17" y="7" width="2" height="1" fill="#d0d0d0"/><rect x="19" y="7" width="1" height="1" fill="#909090"/><rect x="5" y="8" width="2" height="1" fill="#909090"/><rect x="7" y="8" width="2" height="1" fill="#ffffff"/><rect x="9" y="8" width="5" height="1" fill="#d0d0d0"/><rect x="14" y="8" width="2" height="1" fill="#ffffff"/><rect x="16" y="8" width="1" height="1" fill="#909090"/><rect x="17" y="8" width="3" height="1" fill="#d0d0d0"/><rect x="20" y="8" width="1" height="1" fill="#909090"/><rect x="3" y="9" width="2" height="1" fill="#909090"/><rect x="5" y="9" width="3" height="1" fill="#ffffff"/><rect x="8" y="9" width="2" height="1" fill="#00e000"/><rect x="10" y="9" width="6" height="1" fill="#d0d0d0"/><rect x="16" y="9" width="5" height="1" fill="#a4a4a4"/><rect x="21" y="9" width="1" height="1" fill="#000000"/><rect x="3" y="10" width="1" height="1" fill="#909090"/><rect x="4" y="10" width="3" height="1" fill="#ffffff"/><rect x="7" y="10" width="3" height="1" fill="#d0d0d0"/><rect x="10" y="10" width="2" height="1" fill="#ff0000"/><rect x="12" y="10" width="4" height="1" fill="#d0d0d0"/><rect x="16" y="10" width="5" height="1" fill="#a4a4a4"/><rect x="21" y="10" width="1" height="1" fill="#000000"/><rect x="3" y="11" width="1" height="1" fill="#909090"/><rect x="4" y="11" width="2" height="1" fill="#ffffff"/><rect x="6" y="11" width="7" height="1" fill="#d0d0d0"/><rect x="13" y="11" width="8" height="1" fill="#a4a4a4"/><rect x="21" y="11" width="1" height="1" fill="#000000"/><rect x="3" y="12" width="1" height="1" fill="#909090"/><rect x="4" y="12" width="1" height="1" fill="#ffffff"/><rect x="5" y="12" width="7" height="1" fill="#d0d0d0"/><rect x="12" y="12" width="9" height="1" fill="#a4a4a4"/><rect x="21" y="12" width="1" height="1" fill="#000000"/><rect x="3" y="13" width="2" height="1" fill="#000000"/><rect x="5" y="13" width="7" height="1" fill="#d0d0d0"/><rect x="12" y="13" width="8" height="1" fill="#a4a4a4"/><rect x="20" y="13" width="2" height="1" fill="#000000"/><rect x="4" y="14" width="1" height="1" fill="#ffffff"/><rect x="5" y="14" width="2" height="1" fill="#000000"/><rect x="7" y="14" width="5" height="1" fill="#d0d0d0"/><rect x="12" y="14" width="6" height="1" fill="#a4a4a4"/><rect x="18" y="14" width="2" height="1" fill="#000000"/><rect x="20" y="14" width="1" height="1" fill="#ffffff"/><rect x="4" y="15" width="1" height="1" fill="#000000"/><rect x="5" y="15" width="2" height="1" fill="#ffffff"/><rect x="7" y="15" width="2" height="1" fill="#000000"/><rect x="9" y="15" width="3" height="1" fill="#d0d0d0"/><rect x="12" y="15" width="4" height="1" fill="#a4a4a4"/><rect x="16" y="15" width="2" height="1" fill="#000000"/><rect x="18" y="15" width="2" height="1" fill="#ffffff"/><rect x="20" y="15" width="1" height="1" fill="#000000"/><rect x="5" y="16" width="2" height="1" fill="#000000"/><rect x="7" y="16" width="2" height="1" fill="#ffffff"/><rect x="9" y="16" width="2" height="1" fill="#000000"/><rect x="11" y="16" width="3" height="1" fill="#a4a4a4"/><rect x="14" y="16" width="2" height="1" fill="#000000"/><rect x="16" y="16" width="2" height="1" fill="#ffffff"/><rect x="18" y="16" width="2" height="1" fill="#000000"/><rect x="7" y="17" width="2" height="1" fill="#000000"/><rect x="9" y="17" width="2" height="1" fill="#ffffff"/><rect x="11" y="17" width="3" height="1" fill="#000000"/><rect x="14" y="17" width="2" height="1" fill="#ffffff"/><rect x="16" y="17" width="2" height="1" fill="#000000"/><rect x="9" y="18" width="2" height="1" fill="#000000"/><rect x="11" y="18" width="3" height="1" fill="#ffffff"/><rect x="14" y="18" width="2" height="1" fill="#000000"/><rect x="11" y="19" width="3" height="1" fill="#000000"/></svg>
<svg style="left:373px;top:48px" width="20" height="20"><rect x="5" y="0" width="12" height="15" fill="#505050"/><rect x="7" y="2" width="8" height="12" fill="#e4e4e4"/><path d="M2 14.5 L19 14.5" stroke="#505050" stroke-width="1"/><path d="M10.5 6.5 L15.5 2 L15.5 14.5 L10.5 18.5 Z" fill="#e0a000" stroke="#404060" stroke-width="1"/><rect x="12" y="10" width="1" height="2" fill="#404060"/><path d="M0 6.5 H4.5 V4.5 L9 8.5 L4.5 12.5 V10.5 H0 Z" fill="#00e000" stroke="#602060" stroke-width="0.6"/></svg>
<svg style="left:2px;top:748px" width="17" height="14"><path d="M6 0 L15 0 L15 11 L13 13 L3 13 Z" fill="#fff"/><g fill="#ffff00"><rect x="7" y="1" width="1" height="1"/><rect x="11" y="1" width="1" height="1"/><rect x="9" y="2" width="1" height="1"/><rect x="13" y="2" width="1" height="1"/><rect x="11" y="3" width="1" height="1"/><rect x="13" y="4" width="1" height="1"/><rect x="9" y="5" width="1" height="1"/><rect x="11" y="5" width="1" height="1"/><rect x="7" y="7" width="1" height="1"/><rect x="11" y="7" width="1" height="1"/><rect x="5" y="9" width="1" height="1"/><rect x="9" y="9" width="1" height="1"/><rect x="7" y="10" width="1" height="1"/><rect x="4" y="11" width="1" height="1"/><rect x="13" y="9" width="1" height="1"/></g><path d="M15.5 0 L15.5 10 L13 12.5 M3 13.5 L11 13.5 M10 12 L12 9 L14 10" stroke="#000" stroke-width="1" fill="none"/><ellipse cx="2.5" cy="3.5" rx="2" ry="2" fill="#00e0e0" stroke="#000" stroke-width="1"/><ellipse cx="6.5" cy="3.5" rx="2" ry="2" fill="#00c0c0" stroke="#000" stroke-width="1"/><path d="M8.5 3.5 L10 3.5" stroke="#000"/></svg>
</body></html>
